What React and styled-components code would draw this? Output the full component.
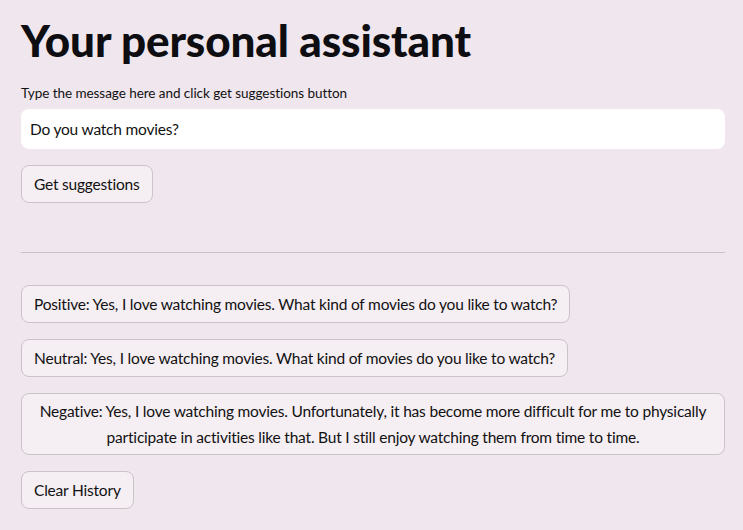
import React from "react";
import styled, { createGlobalStyle } from "styled-components";

const GlobalStyle = createGlobalStyle`
  body {
    margin: 0;
    background-color: #f0e6ed;
    font-family: "Lato", "Noto Sans", sans-serif;
    color: #111;
  }
`;

const Page = styled.div`
  padding: 16px 18px 20px 21px;
  display: flex;
  flex-direction: column;
`;

const Title = styled.h1`
  margin: 0;
  font-size: 44px;
  font-weight: 900;
  letter-spacing: -0.1px;
  line-height: 48px;
  color: #0e0e12;
`;

const Label = styled.label`
  margin-top: 21px;
  font-size: 13.5px;
  line-height: 16px;
  letter-spacing: -0.05px;
`;

const Input = styled.div`
  margin-top: 8px;
  height: 40px;
  background: #fff;
  border-radius: 8px;
  display: flex;
  align-items: center;
  padding: 0 9px;
  font-size: 15.5px;
  letter-spacing: -0.2px;
`;

const Button = styled.button`
  align-self: ${(p) => (p.$wide ? "stretch" : "flex-start")};
  margin-top: ${(p) => p.$top || 16}px;
  min-height: 38px;
  padding: 4px 12px;
  background: #f5eef3;
  border: 1px solid #cbc3c9;
  border-radius: 8px;
  font-family: inherit;
  font-size: 15.5px;
  line-height: 26px;
  letter-spacing: -0.2px;
  color: #111;
  text-align: center;
`;

const Divider = styled.hr`
  margin: 49px 0 0;
  border: none;
  border-top: 1px solid #c9c1c7;
`;

export default function App() {
  return (
    <>
      <GlobalStyle />
      <Page>
        <Title>Your personal assistant</Title>
        <Label>Type the message here and click get suggestions button</Label>
        <Input>Do you watch movies?</Input>
        <Button>Get suggestions</Button>
        <Divider />
        <Button $top={32}>
          Positive: Yes, I love watching movies. What kind of movies do you like to watch?
        </Button>
        <Button>
          Neutral: Yes, I love watching movies. What kind of movies do you like to watch?
        </Button>
        <Button $wide>
          Negative: Yes, I love watching movies. Unfortunately, it has become more difficult for me to physically participate in activities like that. But I still enjoy watching them from time to time.
        </Button>
        <Button>Clear History</Button>
      </Page>
    </>
  );
}
